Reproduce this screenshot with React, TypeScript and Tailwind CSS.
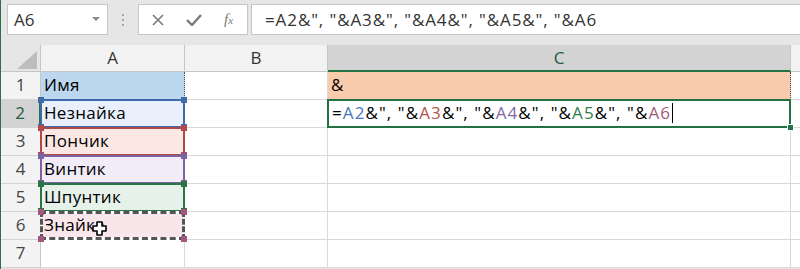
import React from 'react'

const font = { fontFamily: '"Open Sans", "Liberation Sans", sans-serif' }

type RefBox = {
  fill: string
  border: string
  corner: string
  dashed?: boolean
}

const names = ['Имя', 'Незнайка', 'Пончик', 'Винтик', 'Шпунтик', 'Знайка', '']

// цвета рамок ссылок из формулы
const boxes: Record<number, RefBox> = {
  2: { fill: 'bg-[#eaf0fb]', border: 'border-[#3f6aa9]', corner: 'bg-[#3f6aa9]' },
  3: { fill: 'bg-[#fbe8e5]', border: 'border-[#b04a4a]', corner: 'bg-[#b04a4a]' },
  4: { fill: 'bg-[#f1ecf8]', border: 'border-[#7d62a2]', corner: 'bg-[#7d62a2]' },
  5: { fill: 'bg-[#e6f2e9]', border: 'border-[#2a7448]', corner: 'bg-[#2a7448]' },
  6: { fill: 'bg-[#f9e6eb]', border: 'border-[#555555]', corner: 'bg-[#a2587c]', dashed: true },
}

function Corner({ pos, color }: { pos: string; color: string }) {
  return <div className={`absolute w-[6px] h-[6px] ${pos} ${color} z-20`} />
}

function CellA({ row }: { row: number }) {
  const text = names[row - 1]
  const box = boxes[row]

  let bg = 'bg-white'
  if (row === 1) bg = 'bg-[#bdd7ee]'
  if (box) bg = box.fill

  return (
    <div
      className={`relative h-[28px] ${bg} border-b border-[#d9d9d9] ${
        row === 1 ? 'border-r border-r-[#555] border-dotted border-b-solid' : 'border-r border-[#d9d9d9]'
      } flex items-end pl-[3px] pb-[3px] text-[17px] leading-[22px] tracking-[0.3px] text-black`}
      style={font}
    >
      <span>{text}</span>
      {box && (
        <>
          {box.dashed ? (
            <>
              <div className="absolute -top-[1px] -left-[1px] -right-[1px] -bottom-[1px] border-[3px] border-white z-10" />
              <div className="absolute -top-[1px] -left-[1px] -right-[1px] -bottom-[1px] border-[3px] border-dashed border-[#555555] z-10" />
            </>
          ) : (
            <div className={`absolute -top-[1px] -left-[1px] -right-[1px] -bottom-[1px] border-2 ${box.border} z-10`} />
          )}
          <Corner pos="-top-[3px] -left-[3px]" color={box.corner} />
          <Corner pos="-top-[3px] -right-[3px]" color={box.corner} />
          <Corner pos="-bottom-[3px] -left-[3px]" color={box.corner} />
          <Corner pos="-bottom-[3px] -right-[3px]" color={box.corner} />
        </>
      )}
      {row === 6 && (
        <svg className="absolute left-[51px] top-[9px] z-30" width="15" height="15" viewBox="0 0 15 15">
          <path
            d="M5 1h5v4h4v5h-4v4H5v-4H1V5h4z"
            fill="white"
            stroke="black"
            strokeWidth="1.6"
            strokeLinejoin="round"
          />
        </svg>
      )}
    </div>
  )
}

function RowHeader({ row }: { row: number }) {
  const active = row === 2
  return (
    <div
      className={`h-[28px] flex items-end justify-center pb-[3px] text-[17px] leading-[22px] border-b border-[#d4d4d4] ${
        active
          ? 'bg-[#d3d3d3] text-[#245b3d] border-r-2 border-r-[#217346]'
          : 'bg-[#f3f3f3] text-[#444] border-r border-r-[#c6c6c6]'
      }`}
      style={font}
    >
      {row}
    </div>
  )
}

function Formula() {
  return (
    <span className="tracking-[1.1px]">
      =<span className="text-[#4a76b8]">A2</span>&amp;", "&amp;
      <span className="text-[#b5514f]">A3</span>&amp;", "&amp;
      <span className="text-[#8468a8]">A4</span>&amp;", "&amp;
      <span className="text-[#2f8050]">A5</span>&amp;", "&amp;
      <span className="text-[#a05a7c]">A6</span>
    </span>
  )
}

export default function App() {
  const rows = [1, 2, 3, 4, 5, 6, 7]

  return (
    <div className="w-[800px] h-[269px] overflow-hidden bg-[#e6e6e6] border-l border-[#2e6e48] select-none">
      {/* строка формул */}
      <div className="h-[45px] flex items-start pt-[4px] pl-[6px]">
        <div className="w-[101px] h-[31px] bg-white border border-[#c6c6c6] flex items-center justify-between pl-[6px] pr-[7px]">
          <span className="text-[17px] text-[#333]" style={font}>
            A6
          </span>
          <svg width="8" height="5" viewBox="0 0 8 5">
            <path d="M0 0h8L4 4z" fill="#8a8a8a" />
          </svg>
        </div>
        <div className="w-[30px] h-[31px] flex flex-col items-center justify-center gap-[3px]">
          <div className="w-[2px] h-[2px] bg-[#aaa]" />
          <div className="w-[2px] h-[2px] bg-[#aaa]" />
          <div className="w-[2px] h-[2px] bg-[#aaa]" />
        </div>
        <div className="w-[110px] h-[31px] bg-white border border-[#c6c6c6] flex items-center pl-[13px] gap-[22px]">
          <svg width="12" height="12" viewBox="0 0 12 12">
            <path d="M1 1l10 10M11 1L1 11" stroke="#7a7a7a" strokeWidth="1.6" />
          </svg>
          <svg width="16" height="12" viewBox="0 0 16 12">
            <path d="M1 6l5 5L15 1" stroke="#7a7a7a" strokeWidth="2.4" fill="none" />
          </svg>
          <span
            className="text-[15px] italic text-[#777]"
            style={{ fontFamily: '"Liberation Serif", serif' }}
          >
            f<span className="text-[11px]">x</span>
          </span>
        </div>
        <div
          className="flex-1 ml-[3px] h-[31px] bg-white border border-r-0 border-[#c6c6c6] flex items-center pl-[13px] text-[17px] tracking-[0.9px] text-[#333]"
          style={font}
        >
          =A2&amp;", "&amp;A3&amp;", "&amp;A4&amp;", "&amp;A5&amp;", "&amp;A6
        </div>
      </div>

      {/* лист */}
      <div className="grid grid-cols-[40px_144px_143px_463px_1fr] bg-white">
        {/* заголовки столбцов */}
        <div className="h-[27px] bg-[#e6e6e6] border-r border-b border-[#c6c6c6] relative">
          <svg className="absolute left-[16px] top-[6px]" width="21" height="19" viewBox="0 0 21 19">
            <path d="M20 0v18H0z" fill="#bdbdbd" />
          </svg>
        </div>
        <div className="h-[27px] bg-[#f3f3f3] border-r border-b border-[#c6c6c6] flex items-end justify-center pb-[2px] text-[17px] leading-[22px] text-[#333]" style={font}>
          A
        </div>
        <div className="h-[27px] bg-[#f3f3f3] border-r border-b border-[#c6c6c6] flex items-end justify-center pb-[2px] text-[17px] leading-[22px] text-[#333]" style={font}>
          B
        </div>
        <div className="h-[27px] bg-[#d3d3d3] border-r border-r-[#c6c6c6] border-b-2 border-b-[#217346] flex items-end justify-center pb-[1px] text-[17px] leading-[22px] text-[#2a5b40]" style={font}>
          C
        </div>
        <div className="h-[27px] bg-[#f3f3f3] border-b border-[#c6c6c6]" />

        {rows.map((r) => (
          <React.Fragment key={r}>
            <RowHeader row={r} />
            <CellA row={r} />
            <div className="h-[28px] bg-white border-r border-b border-[#d9d9d9]" />
            {r === 1 ? (
              <div className="h-[28px] bg-[#f8cbad] border-r border-dotted border-r-[#444] border-b border-b-[#d9d9d9] flex items-end pl-[3px] pb-[3px] text-[17px] leading-[22px] text-black" style={font}>
                &amp;
              </div>
            ) : r === 2 ? (
              <div className="relative h-[28px] bg-white border-r border-b border-[#d9d9d9] flex items-end pl-[4px] pb-[3px] text-[17px] leading-[22px] text-black" style={font}>
                <Formula />
                <div className="w-[1px] h-[20px] bg-black ml-[1px] mb-[1px]" />
                <div className="absolute -top-[1px] -left-[1px] -right-[1px] -bottom-[1px] border-2 border-[#217346]" />
                <div className="absolute -bottom-[4px] -right-[4px] w-[7px] h-[7px] bg-[#217346] border border-white" />
              </div>
            ) : (
              <div className="h-[28px] bg-white border-r border-b border-[#d9d9d9]" />
            )}
            <div className="h-[28px] bg-white border-b border-[#d9d9d9]" />
          </React.Fragment>
        ))}
      </div>
    </div>
  )
}
